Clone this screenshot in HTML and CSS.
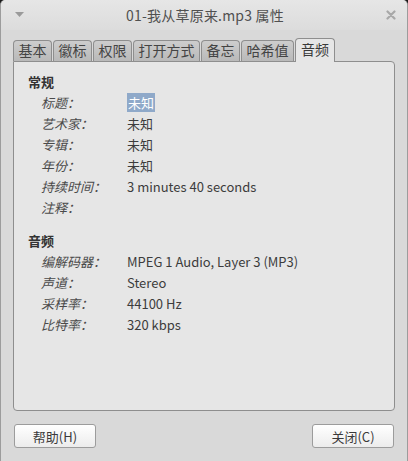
FILE: index.html
```html
<!DOCTYPE html>
<html lang="zh-CN">
<head>
<meta charset="utf-8">
<title>01-我从草原来.mp3 属性</title>
<link rel="stylesheet" href="styles.css">
</head>
<body>
<div class="window">
  <div class="titlebar">
    <svg class="menu-arrow" width="9" height="6" viewBox="0 0 9 6"><path d="M0 0 H9 L4.5 5 Z" fill="#9a9a9a"/></svg>
    <div class="title">01-我从草原来.mp3 属性</div>
    <svg class="close" width="10" height="10" viewBox="0 0 10 10"><path d="M1.5 1.5 L8.5 8.5 M8.5 1.5 L1.5 8.5" stroke="#a8a8a8" stroke-width="2.2" stroke-linecap="round"/></svg>
  </div>
  <div class="content">
    <div class="tabs">
      <div class="tab">基本</div>
      <div class="tab">徽标</div>
      <div class="tab">权限</div>
      <div class="tab">打开方式</div>
      <div class="tab">备忘</div>
      <div class="tab">哈希值</div>
      <div class="tab active">音频</div>
    </div>
    <div class="panel">
      <div class="section-title">常规</div>
      <div class="grid">
        <div class="label">标题：</div><div class="value"><span class="sel">未知</span></div>
        <div class="label">艺术家：</div><div class="value">未知</div>
        <div class="label">专辑：</div><div class="value">未知</div>
        <div class="label">年份：</div><div class="value">未知</div>
        <div class="label">持续时间：</div><div class="value">3 minutes 40 seconds</div>
        <div class="label">注释：</div><div class="value"></div>
      </div>
      <div class="section-title second">音频</div>
      <div class="grid">
        <div class="label">编解码器：</div><div class="value">MPEG 1 Audio, Layer 3 (MP3)</div>
        <div class="label">声道：</div><div class="value">Stereo</div>
        <div class="label">采样率：</div><div class="value">44100 Hz</div>
        <div class="label">比特率：</div><div class="value">320 kbps</div>
      </div>
    </div>
    <div class="buttons">
      <button class="btn">帮助(H)</button>
      <button class="btn">关闭(C)</button>
    </div>
  </div>
</div>
</body>
</html>
```
FILE: styles.css
```css
* { box-sizing: border-box; }
html, body { margin: 0; padding: 0; }
body {
  background: #1a1a1a;
  width: 408px;
  height: 461px;
  overflow: hidden;
  font-family: "Noto Sans CJK SC", "DejaVu Sans", sans-serif;
  color: #3c3c3c;
}
.window {
  width: 408px;
  height: 461px;
  background: #d9d9d9;
  border-radius: 5px 5px 0 0;
  border-left: 1px solid #9c9c9c;
  border-right: 1px solid #9c9c9c;
  display: flex;
  flex-direction: column;
}
.titlebar {
  height: 30px;
  display: flex;
  align-items: center;
  padding: 0 11px 0 14px;
  border-radius: 5px 5px 0 0;
  background: linear-gradient(#e6e6e6, #dcdcdc);
}
.menu-arrow { flex: none; }
.title {
  flex: 1;
  text-align: center;
  font-size: 14px;
  color: #505050;
  letter-spacing: 0.2px;
}
.close { flex: none; }
.content {
  padding: 8px 12px 0 12px;
  display: flex;
  flex-direction: column;
  flex: 1;
}
.tabs {
  display: flex;
  align-items: flex-end;
  height: 23px;
  position: relative;
  z-index: 1;
}
.tab {
  height: 21px;
  padding: 0 4.5px;
  margin-right: 1px;
  font-size: 14px;
  line-height: 19px;
  color: #444;
  border: 1px solid #8e8e8e;
  border-bottom: none;
  border-radius: 4px 4px 0 0;
  background: linear-gradient(#cdcdcd, #b9b9b9);
}
.tab.active {
  height: 24px;
  margin-bottom: -1px;
  background: #e6e6e6;
  color: #3a3a3a;
  padding: 1px 5px 0 5px;
}
.panel {
  height: 350px;
  background: #e6e6e6;
  border: 1px solid #8e8e8e;
  border-radius: 0 4px 4px 4px;
  padding: 10px 0 0 14px;
  font-size: 13px;
}
.section-title {
  font-weight: bold;
  height: 20px;
  line-height: 20px;
  color: #333;
}
.section-title.second { margin-top: 13px; }
.grid {
  display: grid;
  grid-template-columns: 86px 1fr;
  grid-auto-rows: 21px;
  padding-left: 13px;
  line-height: 21px;
}
.label {
  font-style: italic;
  color: #4a4a4a;
}
.value { color: #3c3c3c; }
.sel {
  background: #8fa9c9;
  color: #fff;
  padding: 0 1px;
}
.buttons {
  display: flex;
  justify-content: space-between;
  padding: 13px 1px 0 1px;
}
.btn {
  width: 82px;
  height: 24px;
  font-family: inherit;
  font-size: 13px;
  color: #3a3a3a;
  border: 1px solid #9c9c9c;
  border-radius: 3px;
  background: linear-gradient(#ffffff, #ececec);
  padding: 0;
}
```
